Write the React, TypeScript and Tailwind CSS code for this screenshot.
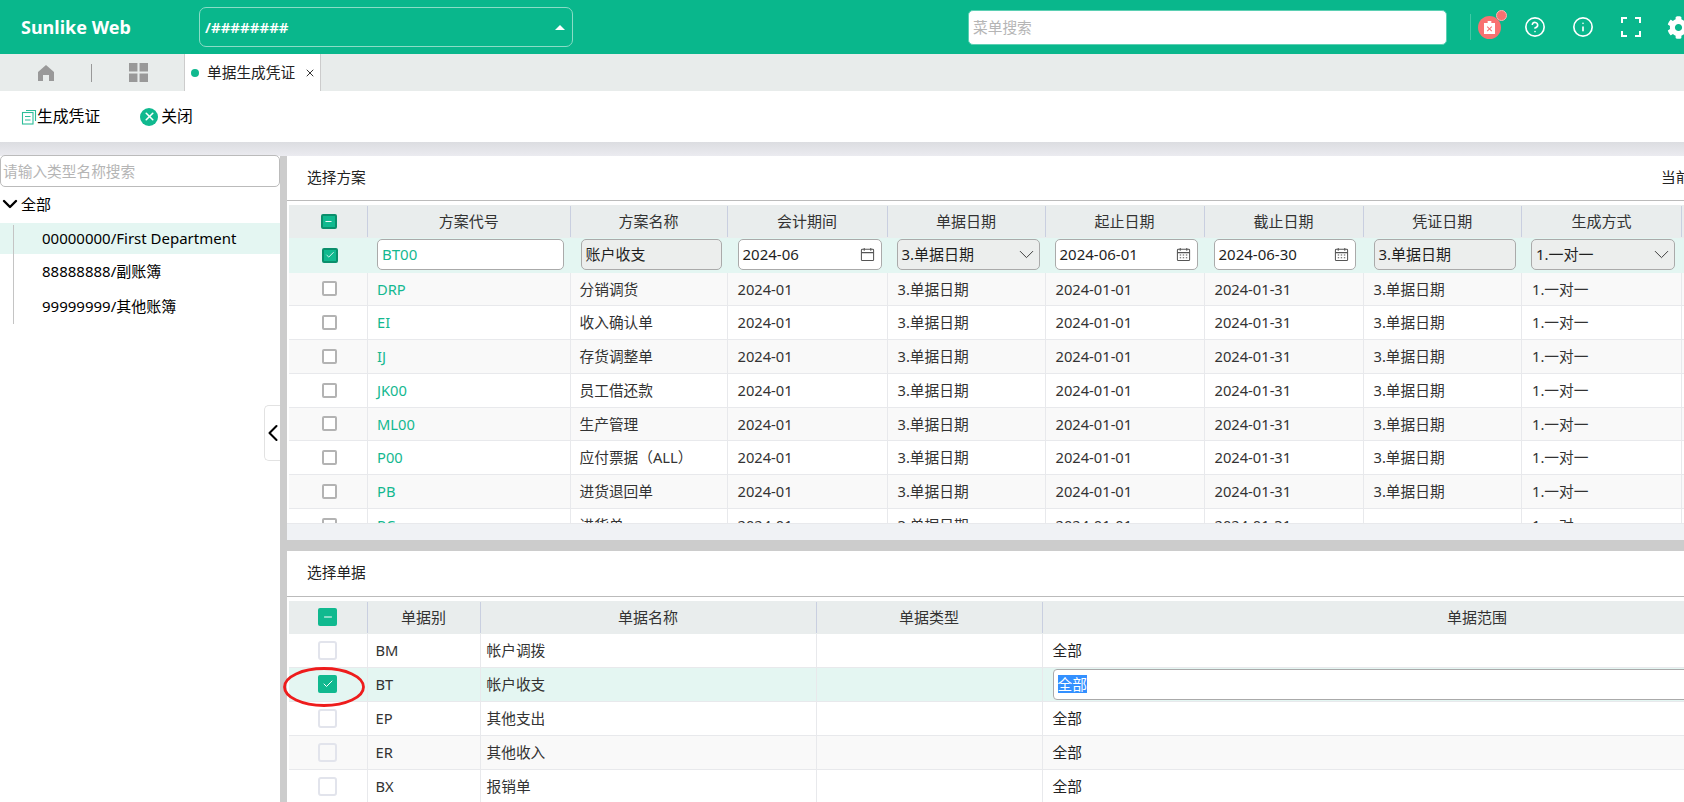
import type { ReactNode } from 'react';
import { Check, ChevronDown, ChevronLeft, HelpCircle, Info, Minus, X } from 'lucide-react';
import { FaCog } from 'react-icons/fa';

const UPPER_COLS = 'grid grid-cols-[79px_202.5px_157px_160px_158px_159px_159px_158.5px_160px_200px]';
const LOWER_COLS = 'grid grid-cols-[78.5px_113px_336px_226px_870px]';

const PLANS = [
  { code: 'DRP', name: '分销调货', voucher: '3.单据日期' },
  { code: 'EI', name: '收入确认单', voucher: '3.单据日期' },
  { code: 'IJ', name: '存货调整单', voucher: '3.单据日期' },
  { code: 'JK00', name: '员工借还款', voucher: '3.单据日期' },
  { code: 'ML00', name: '生产管理', voucher: '3.单据日期' },
  { code: 'P00', name: '应付票据（ALL）', voucher: '3.单据日期' },
  { code: 'PB', name: '进货退回单', voucher: '3.单据日期' },
  { code: 'PC', name: '进货单', voucher: '' },
];

const BILLS = [
  { code: 'BM', name: '帐户调拨' },
  { code: 'BT', name: '帐户收支', selected: true },
  { code: 'EP', name: '其他支出' },
  { code: 'ER', name: '其他收入' },
  { code: 'BX', name: '报销单' },
];

function CalendarIcon({ dense }: { dense?: boolean }) {
  return (
    <svg viewBox="0 0 16 16" className="h-[15px] w-[15px] shrink-0 text-[#555]" fill="none" stroke="currentColor" strokeWidth="1.1">
      <rect x="1.5" y="2.5" width="13" height="12" rx="1" />
      <path d="M4.5 1v3M11.5 1v3M1.5 6h13" />
      {dense && <path d="M4 8.5h1.5M7.2 8.5h1.5M10.5 8.5H12M4 11.5h1.5M7.2 11.5h1.5M10.5 11.5H12" />}
    </svg>
  );
}

function SelectArrow() {
  return <ChevronDown className="mr-[-6px] shrink-0" size={25} strokeWidth={0.9} color="#333333" />;
}

function Field({ text, tail, gray, green }: { text: string; tail?: ReactNode; gray?: boolean; green?: boolean }) {
  return (
    <div
      className={`flex h-[31px] items-center justify-between rounded-[5px] border border-[#aaaaaa] pl-[4px] pr-[6px] text-[15px] ${
        gray ? 'bg-[#eceeed]' : 'bg-white'
      } ${green ? 'text-[#14b890]' : 'text-[#1f1f1f]'}`}
    >
      <span>{text}</span>
      {tail}
    </div>
  );
}

function HeadBox({ big }: { big?: boolean }) {
  return big ? (
    <span className="flex h-[18px] w-[19px] items-center justify-center rounded-[2px] bg-[#10b98f]">
      <Minus size={12} color="white" strokeWidth={2} />
    </span>
  ) : (
    <span className="ml-[1px] flex h-[15px] w-[16px] items-center justify-center rounded-[2px] border-2 border-[#0a8f6c] bg-[#10b98f]">
      <Minus size={9} color="white" strokeWidth={2.5} />
    </span>
  );
}

function HeadCell({ children }: { children: ReactNode }) {
  return (
    <div className="flex h-[31px] items-center justify-center border-r border-[#c9cfe0] text-[15px] text-[#333]">{children}</div>
  );
}

function Cell({ children, className = '' }: { children?: ReactNode; className?: string }) {
  return <div className={`flex items-center border-r border-[#e8e9ec] pl-[10px] text-[#333] ${className}`}>{children}</div>;
}

export default function App() {
  return (
    <div className="flex h-[802px] w-[1684px] flex-col overflow-hidden bg-white font-['Noto_Sans','Noto_Sans_CJK_SC',sans-serif] text-[14.7px] leading-none text-black">
      {/* top bar */}
      <header className="flex h-[54px] shrink-0 items-center bg-[#09b78c] text-white">
        <div className="w-[199px] shrink-0 pl-[21px] text-[18px] font-bold">Sunlike Web</div>
        <div className="flex h-[40px] w-[374px] shrink-0 items-center justify-between rounded-[7px] border border-[#8adcc6] pl-[5px] pr-[7px] text-[15px] font-semibold">
          <span>/########</span>
          <span className="h-0 w-0 border-x-[5px] border-b-[5px] border-x-transparent border-b-white" />
        </div>
        <div className="ml-[395px] flex h-[35px] w-[479px] shrink-0 items-center rounded-[5px] border border-[#5bd0b3] bg-white pl-[4px] text-[#b5b5b5]">
          菜单搜索
        </div>
        <div className="ml-[23px] h-[26px] w-[1px] shrink-0 bg-[#3fc9a6]" />
        <div className="relative ml-[7px] flex h-[23px] w-[23px] shrink-0 items-center justify-center rounded-full bg-[#f87171]">
          <svg viewBox="0 0 12 14" className="h-[13px] w-[11px]">
            <path d="M0 2h12v12H0z M4 0h4v3H4z" fill="white" />
            <path d="M3.5 6l5 5M8.5 6l-5 5" stroke="#f87171" strokeWidth="1.2" />
          </svg>
          <span className="absolute right-[-6px] top-[-6px] h-[11px] w-[11px] rounded-full border border-[#ffb4b4] bg-[#f87171]" />
        </div>
        <HelpCircle className="ml-[23px] shrink-0" size={22} strokeWidth={1.8} />
        <Info className="ml-[26px] shrink-0" size={22} strokeWidth={1.8} />
        <svg viewBox="0 0 22 22" className="ml-[26px] h-[22px] w-[22px] shrink-0" fill="none" stroke="white" strokeWidth="2">
          <path d="M2 7V2h5M15 2h5v5M20 15v5h-5M7 20H2v-5" />
        </svg>
        <FaCog className="ml-[25px] shrink-0" size={23} />
      </header>

      {/* tab bar */}
      <div className="flex h-[37px] shrink-0 items-center bg-[#e8eceb]">
        <div className="flex w-[91px] justify-center">
          <svg viewBox="0 0 18 18" className="h-[18px] w-[18px]" fill="#999999">
            <path d="M9 1 1 8v9h5v-6h6v6h5V8z" />
          </svg>
        </div>
        <div className="h-[18px] w-[1px] bg-[#999]" />
        <div className="flex w-[92px] justify-center">
          <svg viewBox="0 0 18 18" className="h-[19px] w-[19px]" fill="#999999">
            <path d="M0 0h8v8H0zM10 0h8v8h-8zM0 10h8v8H0zM10 10h8v8h-8z" />
          </svg>
        </div>
        <div className="flex h-full w-[137px] items-center border-x border-[#cccccc] bg-white pl-[6px]">
          <span className="h-[8px] w-[8px] rounded-full bg-[#10b98f]" />
          <span className="ml-[8px] text-[#222]">单据生成凭证</span>
          <X className="ml-[9px]" size={12} strokeWidth={1.6} />
        </div>
      </div>

      {/* toolbar */}
      <div className="flex h-[51px] shrink-0 items-center pl-[21px] text-[15.8px]">
        <svg viewBox="0 0 16 16" className="h-[16px] w-[16px]" fill="none" stroke="#2dbd9a" strokeWidth="1.1">
          <path d="M5 1.5h9.5v10.5" />
          <rect x="1.5" y="3.5" width="10.5" height="11.5" />
          <path d="M4 7.5h5.5M4 11h5.5" />
        </svg>
        <span>生成凭证</span>
        <span className="ml-[40px] flex h-[18px] w-[18px] items-center justify-center rounded-full bg-[#10b98f]">
          <X size={13} color="white" strokeWidth={3} />
        </span>
        <span className="ml-[3px]">关闭</span>
      </div>
      <div className="h-[14px] shrink-0 bg-gradient-to-b from-[#dcdde1] to-[#ebebf0]" />

      {/* body */}
      <div className="flex min-h-0 flex-1">
        {/* left tree */}
        <aside className="relative w-[280px] shrink-0 text-[15px]">
          <div className="-mt-[1px] flex h-[32px] items-center rounded-[5px] border border-[#bbbbbb] pl-[2px] text-[14.7px] text-[#b5b5b5]">
            请输入类型名称搜索
          </div>
          <div className="flex h-[36px] items-center pb-[2px]">
            <ChevronDown className="ml-[-2px]" size={24} strokeWidth={2.4} />
            <span className="-ml-[1px]">全部</span>
          </div>
          <div className="relative">
            <div className="absolute bottom-[-1px] left-[13px] top-[2px] w-[1px] bg-[#c4c4c4]" />
            <div className="flex h-[31px] items-center bg-[#e4f6f2] pl-[42px]">00000000/First Department</div>
            <div className="flex h-[35px] items-center pl-[42px]">88888888/副账簿</div>
            <div className="flex h-[34px] items-center pl-[42px]">99999999/其他账簿</div>
          </div>
          <button className="absolute right-0 top-[249px] flex h-[56px] w-[16px] items-center justify-center rounded-l-[5px] border border-r-0 border-[#e2e2e2] bg-white">
            <ChevronLeft className="shrink-0" size={28} strokeWidth={1.8} />
          </button>
        </aside>
        <div className="w-[7px] shrink-0 bg-[#cccccc]" />

        {/* right side */}
        <main className="flex min-w-0 flex-1 flex-col">
          {/* plans */}
          <section className="flex h-[384px] shrink-0 flex-col bg-[#f0f2f5]">
            <div className="flex h-[45px] shrink-0 items-center justify-between border-b border-[#bbbbbb] bg-white pb-[2px] pl-[20px]">
              <span className="text-[#222]">选择方案</span>
              <span className="w-[23px] overflow-hidden whitespace-nowrap text-[#222]">当前会计期间</span>
            </div>
            <div className="h-[323px] shrink-0 overflow-hidden border-b border-[#e8e9ec] bg-white pl-[2px] pt-[4px]">
              <div className={`${UPPER_COLS} h-[33px] items-center bg-[#e9eded]`}>
                <HeadCell>
                  <HeadBox />
                </HeadCell>
                {['方案代号', '方案名称', '会计期间', '单据日期', '起止日期', '截止日期', '凭证日期', '生成方式', ''].map((h) => (
                  <HeadCell key={h}>{h}</HeadCell>
                ))}
              </div>

              <div className={`${UPPER_COLS} h-[34.5px] bg-[#e4f6f2]`}>
                <div className="flex items-center justify-center pl-[2px]">
                  <span className="flex h-[15px] w-[16px] items-center justify-center rounded-[2px] border-2 border-[#0a8f6c] bg-[#10b98f]">
                    <Check size={10} color="white" strokeWidth={2} />
                  </span>
                </div>
                <div className="pl-[9px] pr-[7px] pt-[1px]">
                  <Field text="BT00" green />
                </div>
                <div className="pl-[10px] pr-[6px] pt-[1px]">
                  <Field text="账户收支" gray />
                </div>
                <div className="pl-[10px] pr-[6px] pt-[1px]">
                  <Field text="2024-06" tail={<CalendarIcon />} />
                </div>
                <div className="pl-[9px] pr-[6px] pt-[1px]">
                  <Field text="3.单据日期" gray tail={<SelectArrow />} />
                </div>
                <div className="pl-[9px] pr-[7px] pt-[1px]">
                  <Field text="2024-06-01" tail={<CalendarIcon dense />} />
                </div>
                <div className="pl-[9px] pr-[8px] pt-[1px]">
                  <Field text="2024-06-30" tail={<CalendarIcon dense />} />
                </div>
                <div className="pl-[10px] pr-[6px] pt-[1px]">
                  <Field text="3.单据日期" gray />
                </div>
                <div className="pl-[9px] pr-[7px] pt-[1px]">
                  <Field text="1.一对一" gray tail={<SelectArrow />} />
                </div>
                <div />
              </div>

              {PLANS.map((p, i) => (
                <div
                  key={p.code}
                  className={`${UPPER_COLS} h-[33.75px] border-b border-[#e8e9ec] ${i % 2 === 0 ? 'bg-[#f9f9f9]' : 'bg-white'}`}
                >
                  <div className="flex items-center justify-center border-r border-[#e8e9ec] pl-[2px]">
                    <span className="h-[15px] w-[15px] rounded-[2px] border-2 border-[#b3b3b3] bg-white" />
                  </div>
                  <Cell className="!pl-[9px] !text-[#14b890]">{p.code}</Cell>
                  <Cell className="!pl-[9px]">{p.name}</Cell>
                  <Cell>2024-01</Cell>
                  <Cell>3.单据日期</Cell>
                  <Cell>2024-01-01</Cell>
                  <Cell>2024-01-31</Cell>
                  <Cell>{p.voucher}</Cell>
                  <Cell>1.一对一</Cell>
                  <Cell />
                </div>
              ))}
            </div>
          </section>
          <div className="h-[11px] shrink-0 bg-[#cccccc]" />

          {/* bills */}
          <section className="min-h-0 flex-1 overflow-hidden">
            <div className="flex h-[45.5px] items-center border-b border-[#bbbbbb] pb-[1px] pl-[20px] text-[#222]">选择单据</div>
            <div className="pl-[2px] pt-[4px]">
              <div className={`${LOWER_COLS} h-[33px] items-center bg-[#e9eded]`}>
                <HeadCell>
                  <HeadBox big />
                </HeadCell>
                <HeadCell>单据别</HeadCell>
                <HeadCell>单据名称</HeadCell>
                <HeadCell>单据类型</HeadCell>
                <HeadCell>单据范围</HeadCell>
              </div>
              {BILLS.map((b, i) => (
                <div
                  key={b.code}
                  className={`${LOWER_COLS} h-[34px] border-b border-[#e8e9ec] ${
                    b.selected ? 'bg-[#e4f6f2]' : i === 3 ? 'bg-[#f9f9f9]' : 'bg-white'
                  }`}
                >
                  <div className="flex items-center justify-center border-r border-[#e8e9ec]">
                    {b.selected ? (
                      <span className="flex h-[18px] w-[19px] items-center justify-center rounded-[2px] bg-[#10b98f]">
                        <Check size={12} color="white" strokeWidth={2} />
                      </span>
                    ) : (
                      <span className="h-[19px] w-[19px] rounded-[3px] border-2 border-[#e2e4ec]" />
                    )}
                  </div>
                  <Cell className="!pl-[8px]">{b.code}</Cell>
                  <Cell className="!pl-[6px]">{b.name}</Cell>
                  <Cell />
                  {b.selected ? (
                    <div className="pl-[10px] pt-[1px]">
                      <div className="flex h-[31px] items-center rounded-[4px] border border-[#aaaaaa] bg-white pl-[4px]">
                        <span className="bg-[#3390ff] py-[2px] text-white">全部</span>
                      </div>
                    </div>
                  ) : (
                    <Cell className="!text-[#222]">全部</Cell>
                  )}
                </div>
              ))}
            </div>
          </section>
        </main>
      </div>

      {/* hand-drawn mark over the checkbox */}
      <svg viewBox="0 0 82 40" className="pointer-events-none absolute left-[283px] top-[667px] h-[40px] w-[82px]" fill="none">
        <ellipse cx="41" cy="20" rx="39.5" ry="18.5" stroke="#ee1c1c" strokeWidth="2.8" />
      </svg>
    </div>
  );
}
